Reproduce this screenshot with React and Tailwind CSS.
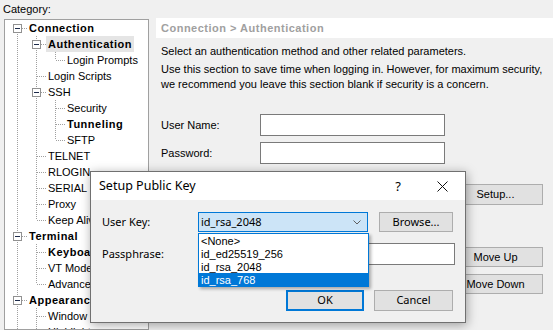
import { useState } from 'react';

const tree = [
  { label: 'Connection', depth: 1, bold: true, box: true, guides: [], first: true },
  { label: 'Authentication', depth: 2, bold: true, box: true, guides: [true], selected: true },
  { label: 'Login Prompts', depth: 3, guides: [true, true], last: true },
  { label: 'Login Scripts', depth: 2, guides: [true] },
  { label: 'SSH', depth: 2, box: true, guides: [true] },
  { label: 'Security', depth: 3, guides: [true, true] },
  { label: 'Tunneling', depth: 3, bold: true, guides: [true, true] },
  { label: 'SFTP', depth: 3, guides: [true, true], last: true },
  { label: 'TELNET', depth: 2, guides: [true] },
  { label: 'RLOGIN', depth: 2, guides: [true] },
  { label: 'SERIAL', depth: 2, guides: [true] },
  { label: 'Proxy', depth: 2, guides: [true] },
  { label: 'Keep Alive', depth: 2, guides: [true], last: true },
  { label: 'Terminal', depth: 1, bold: true, box: true, guides: [] },
  { label: 'Keyboard', depth: 2, bold: true, guides: [true] },
  { label: 'VT Modes', depth: 2, guides: [true] },
  { label: 'Advanced', depth: 2, guides: [true], last: true },
  { label: 'Appearance', depth: 1, bold: true, box: true, guides: [] },
  { label: 'Window', depth: 2, guides: [true] },
  { label: 'Highlight', depth: 2, guides: [true] },
];

const dot = { stroke: '#a0a0a0', strokeDasharray: '1 1', strokeWidth: 1 };

function Guide({ on }) {
  return (
    <svg width="19" height="16" className="block shrink-0">
      {on && <line x1="9.5" y1="0" x2="9.5" y2="16" {...dot} />}
    </svg>
  );
}

function Branch({ first, last, box }) {
  return (
    <svg width="19" height="16" className="block shrink-0">
      {!first && <line x1="9.5" y1="0" x2="9.5" y2="8" {...dot} />}
      {!last && <line x1="9.5" y1="8" x2="9.5" y2="16" {...dot} />}
      <line x1="10" y1="8.5" x2="19" y2="8.5" {...dot} />
      {box && (
        <>
          <rect x="5.5" y="4.5" width="8" height="8" fill="#fff" stroke="#919191" />
          <line x1="7" y1="8.5" x2="12" y2="8.5" stroke="#1c2a4a" />
        </>
      )}
    </svg>
  );
}

function TreeRow({ item }) {
  return (
    <div className="flex h-4 items-center whitespace-nowrap">
      {item.guides.map((g, i) => (
        <Guide key={i} on={g} />
      ))}
      <Branch first={item.first} last={item.last} box={item.box} />
      <span
        className={`px-[2px] leading-4 ${item.bold ? 'font-bold tracking-[0.5px]' : ''} ${item.selected ? 'bg-[#e5e5e5]' : ''}`}
      >
        {item.label}
      </span>
    </div>
  );
}

function WinButton({ children, className }) {
  return (
    <div className={`flex items-center justify-center border border-[#adadad] bg-[#e1e1e1] ${className}`}>
      {children}
    </div>
  );
}

function SetupDialog() {
  const [selected] = useState('id_rsa_768');
  const keys = ['<None>', 'id_ed25519_256', 'id_rsa_2048', 'id_rsa_768'];

  return (
    <div className="absolute left-[90px] top-[171px] w-[376px] h-[152px] border border-[#707070] bg-[#f0f0f0] shadow-[1px_2px_10px_rgba(0,0,0,0.35)] font-['Noto_Sans',sans-serif] text-[11px] text-black">
      <div className="flex h-[28px] items-center bg-white">
        <span className="flex-1 pl-[8px] text-[12.5px] leading-4">Setup Public Key</span>
        <span className="w-[30px] text-center text-[13px] leading-4">?</span>
        <div className="ml-[7px] flex w-[45px] justify-center">
          <svg width="11" height="11" viewBox="0 0 11 11">
            <path d="M0.5 0.5 L10.5 10.5 M10.5 0.5 L0.5 10.5" stroke="#111" strokeWidth="1" />
          </svg>
        </div>
      </div>

      <div className="pl-[11px] pt-[12px]">
        <div className="flex h-[20px] items-center">
          <span className="w-[96px] leading-4">User Key:</span>
          <div className="flex h-[20px] w-[170px] items-center border border-[#0078d7] bg-[#cce4f7] pl-[2px] pr-[6px]">
            <span className="flex-1 leading-4">id_rsa_2048</span>
            <svg width="8" height="5" viewBox="0 0 8 5">
              <path d="M0.5 0.5 L4 4 L7.5 0.5" stroke="#606060" fill="none" />
            </svg>
          </div>
          <WinButton className="ml-[11px] h-[20px] w-[74px]">Browse...</WinButton>
        </div>

        <div className="mt-[11px] flex h-[22px] items-center">
          <span className="w-[96px] leading-4">Passphrase:</span>
          <div className="h-[22px] w-[257px] border border-[#7a7a7a] bg-white" />
        </div>

        <div className="mt-[25px] flex">
          <div className="ml-[184px] flex h-[21px] w-[78px] items-center justify-center border-2 border-[#0078d7] bg-[#e1e1e1]">
            OK
          </div>
          <WinButton className="ml-[10px] h-[21px] w-[79px]">Cancel</WinButton>
        </div>
      </div>

      <div className="absolute left-[107px] top-[61px] w-[171px] border border-[#0078d7] bg-white font-['Liberation_Sans',Arial,sans-serif] text-[11px] shadow-[2px_2px_3px_rgba(0,0,0,0.3)]">
        {keys.map((k) => (
          <div
            key={k}
            className={`flex h-[13px] items-center overflow-hidden pl-[2px] leading-[12px] ${k === selected ? 'bg-[#0078d7] text-white' : ''}`}
          >
            {k}
          </div>
        ))}
      </div>
    </div>
  );
}

export default function App() {
  return (
    <div className="relative h-[330px] w-[553px] overflow-hidden bg-[#f0f0f0] font-['Liberation_Sans',Arial,sans-serif] text-[11px] text-black">
      <div className="flex h-full">
        <div className="flex w-[156px] shrink-0 flex-col">
          <div className="h-[19px] pl-[3px] pt-[1px] leading-4">Category:</div>
          <div className="ml-[4px] h-[320px] w-[145px] overflow-hidden border border-[#a0a0a0] bg-white pl-[3px]">
            {tree.map((item) => (
              <TreeRow key={item.label} item={item} />
            ))}
          </div>
        </div>

        <div className="flex flex-1 flex-col pt-[18px]">
          <div className="h-5 bg-white pl-[5px] font-bold leading-5 tracking-[0.5px] text-[#a0a0a0]">
            Connection &gt; Authentication
          </div>
          <div className="mt-[6px] whitespace-nowrap pl-[5px] leading-[15px]">
            Select an authentication method and other related parameters.
          </div>
          <div className="mt-[3px] whitespace-nowrap pl-[5px] leading-[15px]">
            Use this section to save time when logging in. However, for maximum security,
            <br />
            we recommend you leave this section blank if security is a concern.
          </div>

          <div className="mt-[22px] flex flex-col gap-[6px] pl-[5px]">
            <div className="flex h-[22px] items-center">
              <span className="w-[99px]">User Name:</span>
              <div className="h-[22px] w-[185px] border border-[#7a7a7a] bg-white" />
            </div>
            <div className="flex h-[22px] items-center">
              <span className="w-[99px]">Password:</span>
              <div className="h-[22px] w-[185px] border border-[#7a7a7a] bg-white" />
            </div>
          </div>

          <WinButton className="mr-[10px] mt-[20px] h-[21px] w-[95px] self-end">Setup...</WinButton>
          <WinButton className="mr-[10px] mt-[42px] h-[20px] w-[95px] self-end">Move Up</WinButton>
          <WinButton className="mr-[10px] mt-[7px] h-[20px] w-[95px] self-end">Move Down</WinButton>
        </div>
      </div>

      <SetupDialog />
    </div>
  );
}
